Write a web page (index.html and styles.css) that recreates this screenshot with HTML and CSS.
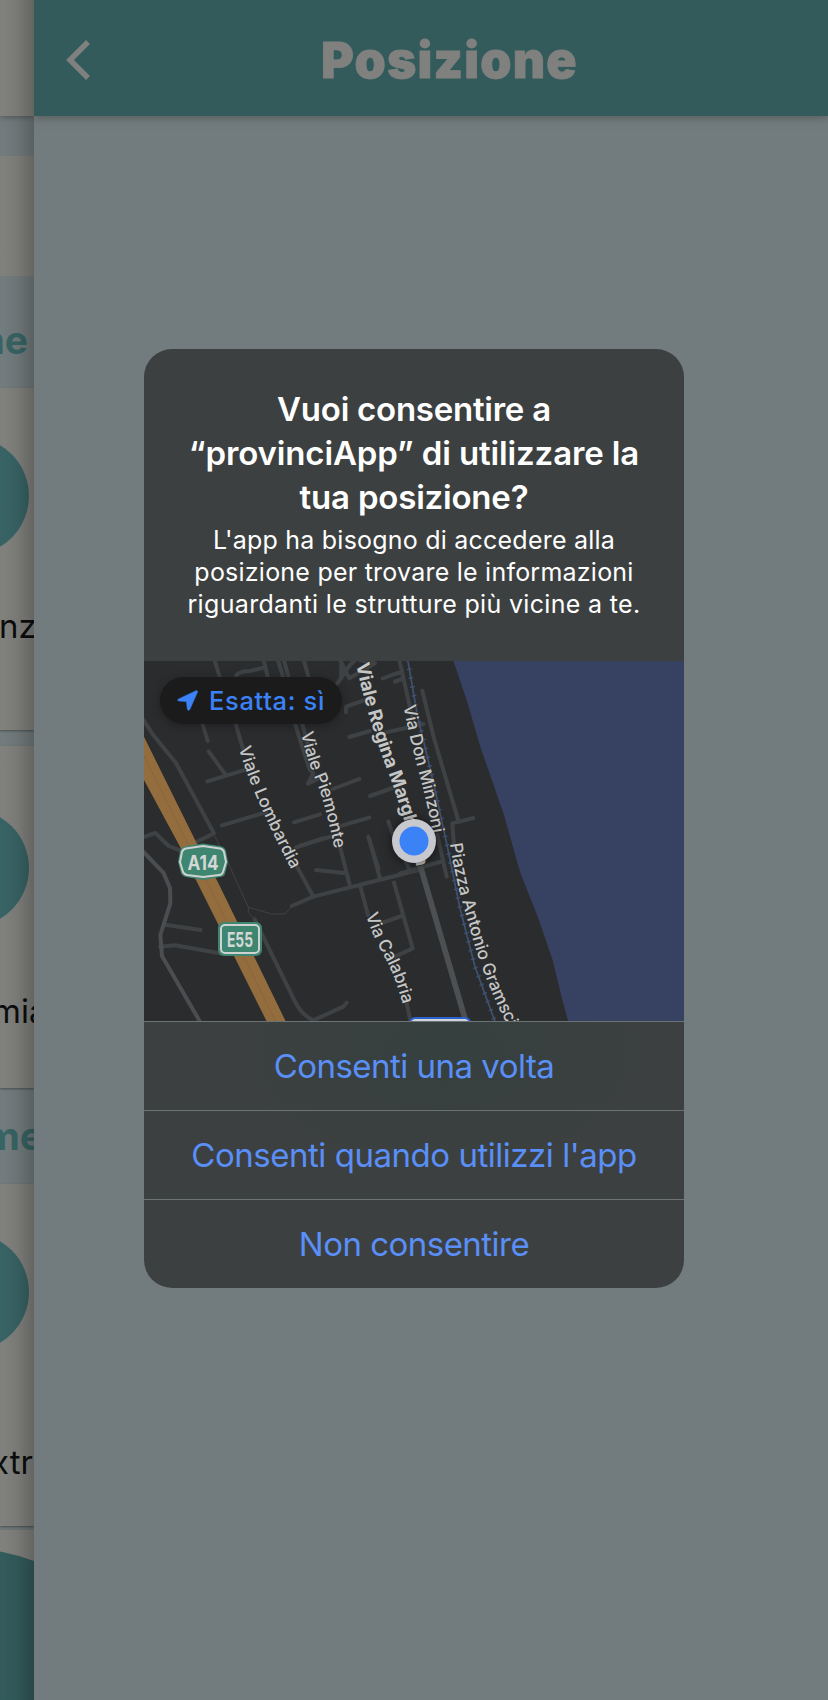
FILE: index.html
```html
<!DOCTYPE html>
<html lang="it">
<head>
<meta charset="utf-8">
<title>Posizione</title>
<link rel="stylesheet" href="styles.css">
</head>
<body>
<div class="app">
  <aside class="previous">
    <div class="prev-header"></div>
    <div class="prev-search"></div>
    <div class="section section-first"><span>me</span></div>
    <div class="card card-a"><i class="dot"></i><span class="label">nze</span></div>
    <div class="card card-b"><i class="dot"></i><span class="label">mia</span></div>
    <div class="section section-second"><span>me</span></div>
    <div class="card card-c"><i class="dot"></i><span class="label">xtra</span></div>
    <div class="card card-d"><i class="dot dot-large"></i></div>
    <div class="edge-shade"></div>
  </aside>
  <main class="page">
    <header class="bar">
      <svg class="back" width="24" height="40" viewBox="0 0 24 40"><path d="M22 2 L4 20 L22 38" fill="none" stroke="#80817f" stroke-width="5.500"/></svg>
      <h1>Posizione</h1>
    </header>
  </main>
  <section class="dialog">
    <h2><span class="t1">Vuoi consentire a</span><span class="t2">“provinciApp” di utilizzare la</span><span class="t3">tua posizione?</span></h2>
    <p><span class="b1">L'app ha bisogno di accedere alla</span><span class="b2">posizione per trovare le informazioni</span><span class="b3">riguardanti le strutture più vicine a te.</span></p>
    <div class="map">
      <svg width="540" height="360" viewBox="144 661 540 360">
        <defs>
          <path id="lombardia" d="M239 748 Q249 788 293 873"/>
          <path id="piemonte" d="M301 733 Q306 757 316 781 Q325 801 336 856"/>
          <path id="regina" d="M356 664 Q369 724 391 780 Q407 825 418 873"/>
          <path id="minzoni" d="M403.500 706 Q407 728 419 773 Q428 805 434 842"/>
          <path id="gramsci" d="M450 844 Q455 880 469 925 Q482 978 514 1038"/>
          <path id="calabria" d="M366 915 Q371 932 383 954 Q397 979 404 1010"/>
        </defs>
        <rect x="144" y="661" width="540" height="360" fill="#2b2c2e"/>
        <g transform="translate(400 655) scale(.33333)">
          <path d="M159 14 L202 142 L241 275 L312 480 L361 654 L415 790 L458 915 L484 1022 L506 1105 H860 V14 Z" fill="#374263"/>
        </g>
        <g class="road" transform="translate(140 655) scale(.33333)">
          <path d="M222 10 L242 75 M184 195 L203 258 M285 200 L310 285 M206 289 L257 360 M202 379 L330 340 M288 62 Q298 48 330 48 L372 38 M370 10 L384 70 M412 10 L432 75 M430 10 L448 75 M490 10 L508 75 M463 200 L508 342 L520 355 L504 386 L545 365 M484 195 L505 275"/>
          <path d="M246 511 L378 472 M462 502 L540 478 M578 402 L658 372 M605 512 L688 488 M478 573 L605 535 M628 246 L690 228 M735 233 L850 207 M690 423 L775 393 M745 500 L770 570 M688 553 L715 640 M618 172 V155 L690 130 M592 85 L630 30 L645 15 M600 15 L628 70 L700 28 M604 70 V15 M660 15 L705 25 M728 70 L785 50 M765 80 L790 70 M777 10 L815 180"/>
          <path d="M0 178 L38 238 L108 324 L222 535 L150 570 M0 550 L46 534 L86 573 L130 590"/>
        </g>
        <g class="road" transform="translate(140 840) scale(.33333)">
          <path d="M455 198 L520 170 L848 87 M472 82 L520 170 M468 23 L548 -5 M600 20 L630 138 M528 90 L618 100 M685 -10 L720 115 M795 60 L810 92 M660 135 L684 225 M762 128 L818 325 L765 350 M728 248 L785 228 M800 490 L815 560"/>
          <path d="M344 238 L465 485 Q485 525 520 541 L610 500 L620 488 M80 255 L182 270 M60 320 L105 316 L240 340"/>
          <path d="M0 25 L70 98 L90 144 L91 190 L61 285 L66 348 L180 545" stroke="#4a4e50"/>
          <path d="M225 -10 L265 70 L325 202 L395 222 H435 L455 200 M325 202 V218 L345 238" stroke-width="3"/>
        </g>
        <g class="road" transform="translate(400 655) scale(.33333)">
          <path d="M67 107 L102 250 L175 497 M162 570 L157 505 L220 489 M0 655 L130 618 M112 540 L140 665"/>
          <path d="M60 630 L200 1108" stroke="#4d5052" stroke-width="17"/>
          <path d="M23 14 L52 180 L95 360 L140 565 L180 760 L225 935 L287 1105" stroke="#3f5272" stroke-width="5"/>
          <path d="M23 14 L52 180 L95 360 L140 565 L180 760 L225 935 L287 1105" stroke="#3f5272" stroke-width="14" stroke-dasharray="4 23" stroke-linecap="butt"/>
        </g>
        <path d="M144 736.700 L196.700 843.300 L218.300 883 L286 1022 H267 L196 880 L180 846.700 L144 780 Z" fill="#936d3e"/>
        <path d="M144 756 L206 880 L276 1022" fill="none" stroke="#8a663b"/>
        <g class="street">
          <text><textPath href="#lombardia" textLength="133">Viale Lombardia</textPath></text>
          <text><textPath href="#piemonte" textLength="121">Viale Piemonte</textPath></text>
          <text class="major"><textPath href="#regina" textLength="212">Viale Regina Margherita</textPath></text>
          <text><textPath href="#minzoni" textLength="131">Via Don Minzoni</textPath></text>
          <text><textPath href="#gramsci" textLength="193">Piazza Antonio Gramsci</textPath></text>
          <text><textPath href="#calabria" textLength="97">Via Calabria</textPath></text>
        </g>
        <path d="M186 846 L203 843.500 L220 846 Q225 847 226 851 L228 862 L225 874 Q224 877 220 877 L203 880 L186 877 Q182 876 181 873 L178 862 L180 851 Q181 847 186 846 Z" fill="#3e8670"/>
        <path d="M186 848.500 L203 846 L220 848.500 Q223 849 224 852 L226 862 L223 872 Q222 875 219 875 L203 877 L187 875 Q184 874 183 872 L180 862 L182 852 Q183 849 186 848.500 Z" fill="none" stroke="#cfd2d1" stroke-width="2"/>
        <text class="shield" x="187.500" y="869.500" textLength="31" lengthAdjust="spacingAndGlyphs">A14</text>
        <rect x="218" y="922" width="44" height="34" rx="6" fill="#3e8670"/>
        <rect x="221" y="925" width="38" height="28" rx="4" fill="none" stroke="#cfd2d1" stroke-width="2"/>
        <text class="shield" x="227" y="946.500" textLength="26" lengthAdjust="spacingAndGlyphs">E55</text>
        <rect x="409.500" y="1018" width="61" height="20" rx="6" fill="#d0d3da" stroke="#2d61ce" stroke-width="2"/>
        <circle class="pin" cx="414" cy="841" r="22" fill="#c8c8cf"/>
        <circle cx="414" cy="841" r="14.500" fill="#3b82f7"/>
      </svg>
      <div class="pill">
        <svg width="21" height="21" viewBox="0 0 21 21"><path d="M1.200 9.200 L19 .8 Q21 .3 20.400 2.200 L12.800 19.500 Q11 21.500 10.300 19 L9.500 11.500 L2 11 Q-.5 10.500 1.200 9.200 Z" fill="#3b82f7" stroke="#3b82f7" stroke-width=".6"/></svg>
        <span>Esatta: sì</span>
      </div>
    </div>
    <button><span class="a1">Consenti una volta</span></button>
    <button><span class="a2">Consenti quando utilizzi l'app</span></button>
    <button><span class="a3">Non consentire</span></button>
  </section>
</div>
</body>
</html>
```
FILE: styles.css
```css
* { box-sizing: border-box; }
body { margin: 0; font-family: Inter, "Liberation Sans", sans-serif; }
.app { display: flex; width: 828px; height: 1700px; position: relative; overflow: hidden; background: #727b7d; }

.previous { position: relative; width: 34px; height: 1700px; flex: none; overflow: hidden; background: #727b7d; }
.prev-header { height: 116px; background: #80817d; box-shadow: 0 1px 6px #4f5555; }
.prev-search { height: 120px; margin-top: 40px; background: #80817d; }
.section { display: flex; justify-content: flex-end; font-weight: 700; font-size: 39px; color: #386464; }
.section-first { height: 112px; padding: 40px 6px 0 0; line-height: 48px; }
.section-second { height: 96px; padding: 24px 0 0; line-height: 48px; }
.section-second span { margin-right: -9px; }
.card { position: relative; height: 342px; background: #80817d; box-shadow: 0 1px 2px #4a5050; }
.card-a { margin-bottom: 16px; }
.card-c { margin-bottom: 4px; }
.card-d { height: 170px; overflow: hidden; }
.dot { position: absolute; left: -89px; top: 49px; width: 118px; height: 118px; border-radius: 50%; background: #386365; }
.card-b .dot { top: 63px; }
.dot-large { left: -207px; top: 19px; width: 354px; height: 354px; background: #335b5b; }
.label { position: absolute; left: -1px; font-size: 33px; line-height: 40px; color: #0c0d0d; }
.card-a .label { top: 218px; }
.card-b .label { left: -8px; top: 245px; }
.card-c .label { left: -9px; top: 258px; }
.edge-shade { position: absolute; inset: 0; background: linear-gradient(90deg, rgba(0,0,0,0) 10%, rgba(0,0,0,.06) 50%, rgba(0,0,0,.22) 100%); }

.page { flex: 1; }
.bar { position: relative; display: flex; align-items: center; height: 116px; padding: 4px 0 0 32px; background: #335b5b; box-shadow: 0 1px 9px #515856; clip-path: inset(0 0 -20px 0); }
.back { flex: none; }
.bar h1 { margin: 0 0 0 231px; font-size: 50px; font-weight: 900; line-height: 60px; color: #80817f; letter-spacing: 1.200px; -webkit-text-stroke: .8px #80817f; white-space: nowrap; }

.dialog { position: absolute; left: 144px; top: 349px; width: 540px; height: 939px; border-radius: 28px; overflow: hidden; background: radial-gradient(ellipse 230px 140px at 300px 700px, #35403f, #3d4040); display: flex; flex-direction: column; text-align: center; color: #fff; }
.dialog h2 { margin: 38px 0 0; font-size: 33px; font-weight: 600; line-height: 44px; }
.dialog h2 span, .dialog p span { display: block; white-space: nowrap; }
.dialog .t1 { letter-spacing: -.25px; }
.dialog .t2 { letter-spacing: -.12px; }
.dialog .t3 { letter-spacing: -.2px; }
.dialog p { margin: 5px 0 0; height: 137px; flex: none; font-size: 25px; line-height: 32px; }
.b1 { letter-spacing: .22px; }
.b2 { letter-spacing: .23px; }
.b3 { letter-spacing: .33px; }
.map { position: relative; height: 360px; flex: none; }
.map > svg { display: block; }
.road { fill: none; stroke: #3f4244; stroke-width: 12; stroke-linecap: round; stroke-linejoin: round; }
.street { font-size: 17.200px; font-weight: 500; fill: #c5c7c6; stroke: #2b2c2e; stroke-width: 1.500px; paint-order: stroke; }
.major { font-size: 18.500px; font-weight: 700; }
.shield { font-size: 20px; font-weight: 700; fill: #d4d7d6; }
.pin { filter: drop-shadow(0 1px 6px rgba(0,0,0,.6)); }
.pill { position: absolute; left: 16px; top: 16px; width: 182px; height: 47px; border-radius: 24px; display: flex; align-items: center; gap: 11px; padding-left: 17px; background: #1b1b1b; box-shadow: 0 2px 10px rgba(0,0,0,.3); color: #3b82f7; font-size: 25.500px; font-weight: 500; letter-spacing: .65px; white-space: nowrap; }
.dialog button { height: 89px; flex: none; margin: 0; padding: 0; border: 0; border-top: 1px solid #6c7373; background: transparent; color: #5a8ff7; font-family: inherit; font-size: 33px; letter-spacing: -.52px; white-space: nowrap; }
.dialog .a2 { letter-spacing: -.47px; }
```
